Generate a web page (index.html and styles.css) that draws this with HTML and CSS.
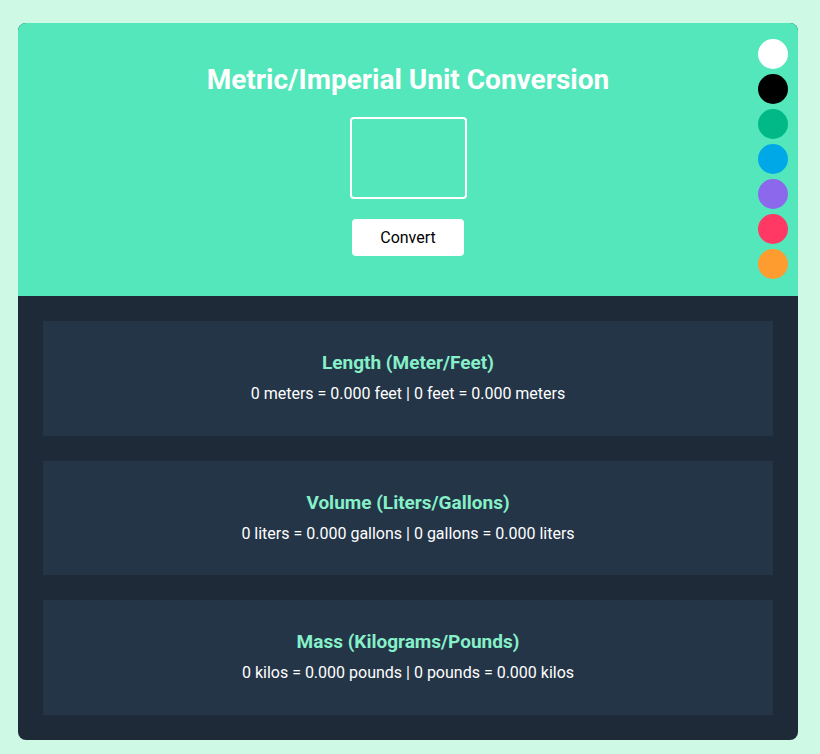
FILE: index.html
```html
<!DOCTYPE html>
<html lang="en">
<head>
<meta charset="utf-8">
<title>Metric/Imperial Unit Conversion</title>
<link rel="stylesheet" href="styles.css">
</head>
<body>
<main class="card">
  <section class="top">
    <h1 class="title">Metric/Imperial Unit Conversion</h1>
    <input class="num-input" type="text" aria-label="Value">
    <button class="convert-btn">Convert</button>
    <div class="swatches">
      <span class="swatch sw-white"></span>
      <span class="swatch sw-black"></span>
      <span class="swatch sw-green"></span>
      <span class="swatch sw-blue"></span>
      <span class="swatch sw-purple"></span>
      <span class="swatch sw-red"></span>
      <span class="swatch sw-orange"></span>
    </div>
  </section>
  <section class="bottom">
    <div class="panel">
      <h2 class="panel-title">Length (Meter/Feet)</h2>
      <p class="panel-text">0 meters = 0.000 feet | 0 feet = 0.000 meters</p>
    </div>
    <div class="panel">
      <h2 class="panel-title">Volume (Liters/Gallons)</h2>
      <p class="panel-text">0 liters = 0.000 gallons | 0 gallons = 0.000 liters</p>
    </div>
    <div class="panel">
      <h2 class="panel-title">Mass (Kilograms/Pounds)</h2>
      <p class="panel-text">0 kilos = 0.000 pounds | 0 pounds = 0.000 kilos</p>
    </div>
  </section>
</main>
</body>
</html>
```

FILE: styles.css
```css
* { box-sizing: border-box; }
html, body { margin: 0; padding: 0; }
body {
  background: #cdf9e5;
  font-family: Roboto, "Liberation Sans", sans-serif;
  padding: 23px 22px 14px 18px;
}
.card {
  width: 780px;
  height: 717px;
  border-radius: 8px;
  overflow: hidden;
  display: flex;
  flex-direction: column;
  background: #1e2a38;
}
.top {
  position: relative;
  background: #53e7bb;
  height: 273px;
  flex-shrink: 0;
  display: flex;
  flex-direction: column;
  align-items: center;
  padding-top: 38px;
}
.title {
  margin: 0;
  color: #ffffff;
  font-size: 28px;
  font-weight: 700;
  line-height: 37px;
}
.num-input {
  margin-top: 19px;
  width: 117px;
  height: 82px;
  border: 2px solid #ffffff;
  border-radius: 4px;
  background: transparent;
  outline: none;
}
.convert-btn {
  margin-top: 20px;
  width: 112px;
  height: 37px;
  border: none;
  border-radius: 4px;
  background: #ffffff;
  color: #000000;
  font-family: Roboto, "Liberation Sans", sans-serif;
  font-size: 16px;
  padding: 0;
}
.swatches {
  position: absolute;
  top: 16px;
  right: 10px;
  display: flex;
  flex-direction: column;
  gap: 5px;
}
.swatch {
  display: block;
  width: 30px;
  height: 30px;
  border-radius: 50%;
}
.sw-white { background: #ffffff; }
.sw-black { background: #000000; }
.sw-green { background: #00b987; }
.sw-blue { background: #00a8e8; }
.sw-purple { background: #8b68ec; }
.sw-red { background: #ff3964; }
.sw-orange { background: #ff9c30; }
.bottom {
  flex: 1;
  display: flex;
  flex-direction: column;
  gap: 25px;
  padding: 25px;
}
.panel {
  flex: 1;
  background: #243548;
  display: flex;
  flex-direction: column;
  align-items: center;
  padding-top: 30px;
}
.panel-title {
  margin: 0;
  color: #86f0c9;
  font-size: 19px;
  font-weight: 700;
  line-height: 23px;
}
.panel-text {
  margin: 9px 0 0;
  color: #ffffff;
  font-size: 16px;
  line-height: 22px;
}
```
